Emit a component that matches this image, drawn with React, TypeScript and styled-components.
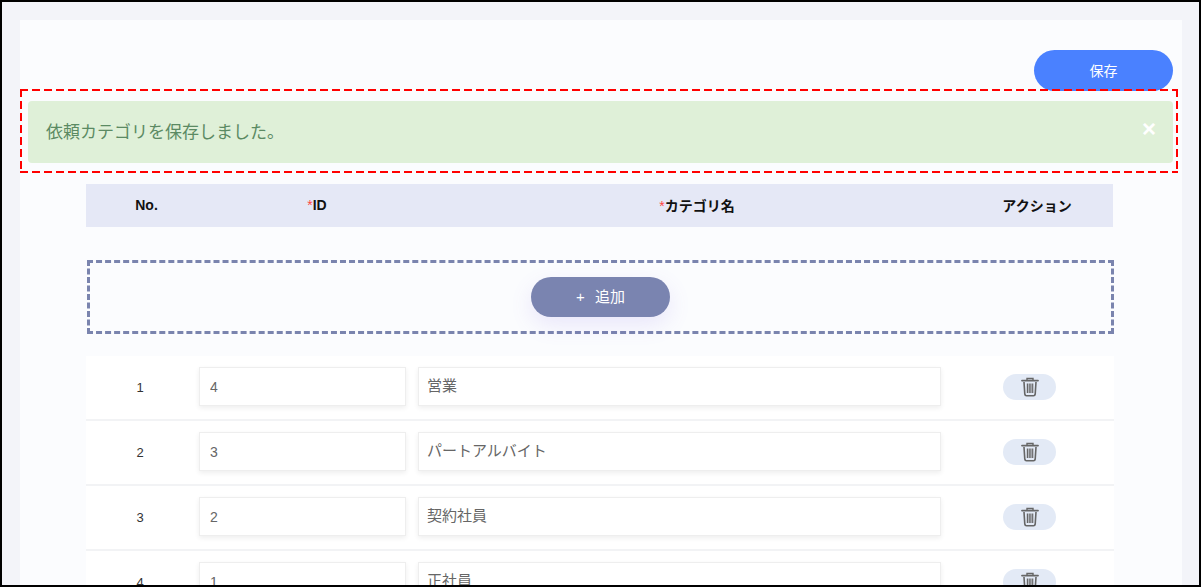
import React from 'react';
import styled, { createGlobalStyle } from 'styled-components';

const Global = createGlobalStyle`
  html, body {
    margin: 0;
    padding: 0;
    overflow: hidden;
  }
  body {
    font-family: "Liberation Sans", "Noto Sans CJK JP", sans-serif;
  }
`;

// CSS in JS
const Shell = styled.div`
  box-sizing: border-box;
  width: 1201px;
  height: 587px;
  border: 2px solid #000;
  background: #f3f4f9;
  padding: 18px 17px 0 18px;
  overflow: hidden;
`;

const Panel = styled.main`
  position: relative;
  width: 1162px;
  height: 600px;
  background: #fbfcfe;
`;

const Toolbar = styled.div`
  display: flex;
  justify-content: flex-end;
  padding: 30px 9px 0 0;
`;

const SaveButton = styled.button`
  width: 139px;
  height: 41px;
  padding: 0 0 2px;
  border: 0;
  border-radius: 21px;
  background: #4a81ff;
  color: #fff;
  font: inherit;
  font-size: 14px;
`;

const Alert = styled.div`
  display: flex;
  align-items: center;
  justify-content: space-between;
  box-sizing: border-box;
  height: 62px;
  margin: 10px 9px 0 8px;
  padding: 0 17px 3px 18px;
  border-radius: 4px;
  background: #dff0d8;
  color: #5b8a63;
  font-size: 17px;
`;

const Close = styled.span`
  color: #fff;
  font-size: 24px;
  font-weight: bold;
  line-height: 1;
  margin: -3px 0 0;
`;

const Highlight = styled.div`
  position: absolute;
  top: 69px;
  left: 0;
  width: 1158px;
  height: 84px;
  pointer-events: none;
  background:
    repeating-linear-gradient(90deg, #f00 0 8px, transparent 8px 12px) top / 100% 2px no-repeat,
    repeating-linear-gradient(90deg, #f00 0 8px, transparent 8px 12px) bottom / 100% 2px no-repeat,
    repeating-linear-gradient(180deg, #f00 0 8px, transparent 8px 12px) left / 2px 100% no-repeat,
    repeating-linear-gradient(180deg, #f00 0 8px, transparent 8px 12px) right / 2px 100% no-repeat;
`;

const Content = styled.section`
  width: 1028px;
  margin: 21px 0 0 66px;
`;

const TableHead = styled.div`
  display: grid;
  grid-template-columns: 121px 220px 540px 140px;
  align-items: center;
  box-sizing: border-box;
  width: 1027px;
  height: 43px;
  padding-bottom: 2px;
  background: #e5e8f6;
  color: #111;
  font-size: 14px;
  font-weight: bold;
`;

const HeadCell = styled.div`
  text-align: center;
  span {
    color: #f44;
    font-weight: normal;
  }
`;

const AddArea = styled.div`
  display: flex;
  align-items: center;
  justify-content: center;
  box-sizing: border-box;
  height: 74px;
  margin: 33px 0 22px 1px;
  border: 3px dashed #7a84ae;
`;

const AddButton = styled.button`
  width: 139px;
  height: 40px;
  padding: 0 0 3px;
  border: 0;
  border-radius: 20px;
  background: #7a84b0;
  color: #fff;
  font: inherit;
  font-size: 15px;
  box-shadow: 0 8px 22px rgba(124, 100, 230, 0.14);
  i {
    font-style: normal;
    margin-right: 10px;
  }
`;

const Row = styled.div`
  display: grid;
  grid-template-columns: 101px 207px 523px 1fr;
  column-gap: 12px;
  align-items: center;
  box-sizing: border-box;
  height: 65px;
  padding-bottom: 2px;
  background: #fff;
  border-bottom: 2px solid #f2f3f5;
`;

const RowNo = styled.div`
  padding: 2px 0 0 7px;
  text-align: center;
  color: #333;
  font-size: 13px;
`;

const Field = styled.input<{ $cjk?: boolean }>`
  box-sizing: border-box;
  width: 100%;
  height: 39px;
  padding: ${(p) => (p.$cjk ? '0 8px 4px' : '0 10px')};
  border: 1px solid #eeeeee;
  background: #fff;
  box-shadow: 0 2px 5px rgba(0, 0, 0, 0.07);
  color: #666;
  font: inherit;
  font-size: ${(p) => (p.$cjk ? '15px' : '14px')};
  outline: none;
`;

const DeleteButton = styled.button`
  display: flex;
  align-items: center;
  justify-content: center;
  width: 53px;
  height: 26px;
  margin-left: 50px;
  padding: 0;
  border: 0;
  border-radius: 13px;
  background: #e3eaf6;
  color: #666;
`;

const TrashIcon = () => (
  <svg width="18" height="20" viewBox="0 0 18 20" fill="none" stroke="currentColor">
    <path d="M6 3V1.5h6V3" strokeWidth="1.4" />
    <path d="M1 3.6h16" strokeWidth="1.8" strokeLinecap="round" />
    <path d="M3 5l.8 12.2c.1 1 .8 1.6 1.7 1.6h7c.9 0 1.6-.6 1.7-1.6L15 5" strokeWidth="1.6" />
    <path d="M6.4 6.5v9.5M8.2 6.5v9.5M9.9 6.5v9.5M11.7 6.5v9.5" strokeWidth="1.2" />
  </svg>
);

const rows = [
  { no: 1, id: '4', name: '営業' },
  { no: 2, id: '3', name: 'パートアルバイト' },
  { no: 3, id: '2', name: '契約社員' },
  { no: 4, id: '1', name: '正社員' },
];

export default function App() {
  return (
    <>
      <Global />
      <Shell>
        <Panel>
          <Toolbar>
            <SaveButton>保存</SaveButton>
          </Toolbar>
          <Alert>
            依頼カテゴリを保存しました。
            <Close>×</Close>
          </Alert>
          <Highlight />
          <Content>
            <TableHead>
              <HeadCell>No.</HeadCell>
              <HeadCell><span>*</span>ID</HeadCell>
              <HeadCell><span>*</span>カテゴリ名</HeadCell>
              <HeadCell>アクション</HeadCell>
            </TableHead>
            <AddArea>
              <AddButton><i>+</i>追加</AddButton>
            </AddArea>
            {rows.map((row) => (
              <Row key={row.no}>
                <RowNo>{row.no}</RowNo>
                <Field defaultValue={row.id} />
                <Field $cjk defaultValue={row.name} />
                <DeleteButton aria-label="削除"><TrashIcon /></DeleteButton>
              </Row>
            ))}
          </Content>
        </Panel>
      </Shell>
    </>
  );
}
